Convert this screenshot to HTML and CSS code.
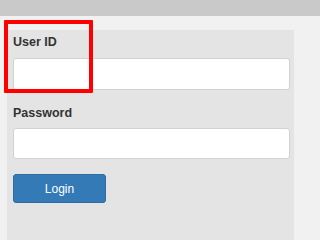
FILE: index.html
```html
<!DOCTYPE html>
<html>
<head>
<meta charset="utf-8">
<link rel="stylesheet" href="styles.css">
</head>
<body>
<div class="topbar"></div>
<div class="page">
  <form class="panel">
    <label class="lbl lbl-first">User ID</label>
    <input class="field field-first" type="text">
    <label class="lbl lbl-second">Password</label>
    <input class="field field-second" type="password">
    <button class="btn" type="button">Login</button>
  </form>
  <div class="highlight"></div>
</div>
</body>
</html>
```
FILE: styles.css
```css
html, body {
  margin: 0;
  padding: 0;
  background: #f1f1f1;
  font-family: "Liberation Sans", Arial, sans-serif;
  overflow: hidden;
}
.topbar {
  height: 16px;
  background: #c9c9c9;
}
.page {
  position: relative;
  box-sizing: border-box;
  width: 300px;
  padding: 14px 6px 0 7px;
}
.panel {
  display: flex;
  flex-direction: column;
  align-items: flex-start;
  background: #e4e4e4;
  padding: 5px 4px 40px 6px;
  margin: 0;
}
.lbl {
  font-size: 12.5px;
  font-weight: bold;
  line-height: 15px;
  color: #333;
}
.lbl-second {
  margin-top: 16px;
}
.field {
  box-sizing: border-box;
  width: 100%;
  height: 32px;
  margin: 8px 0 0;
  background: #fff;
  border: 1px solid #d2d2d2;
  border-radius: 3px;
  padding: 0 8px;
}
.field-second {
  margin-top: 7px;
  height: 31px;
}
.btn {
  box-sizing: border-box;
  margin-top: 15px;
  width: 93px;
  height: 29px;
  background: #337ab7;
  border: 1px solid #2e6da4;
  border-radius: 3px;
  color: #fff;
  font-family: "Liberation Sans", Arial, sans-serif;
  font-size: 12px;
  padding: 0;
}
.highlight {
  position: absolute;
  left: 4px;
  top: 4px;
  width: 81px;
  height: 65px;
  border: 4px solid #ff0000;
  border-radius: 1px;
}
```
